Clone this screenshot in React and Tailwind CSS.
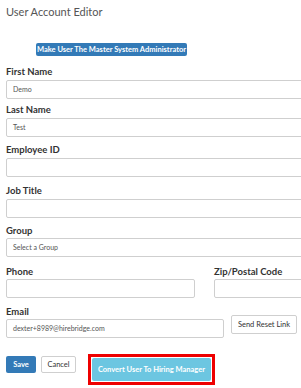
export default function App() {
  const font = { fontFamily: "Lato, 'Open Sans', sans-serif" };
  const label = "h-[12px] text-[9.5px] leading-[12px] font-bold text-[#333]";
  const input =
    "h-[19px] border border-[#cfcfcf] rounded-[2px] bg-white px-[6px] text-[7px] leading-[17px] text-[#555]";

  return (
    <div className="flex flex-col w-[301px] h-[388px] overflow-hidden bg-white pl-[6px]" style={font}>
      <div className="pt-[5px] text-[11px] leading-[14px] text-[#555]">User Account Editor</div>

      <div className="flex mt-[24px] ml-[30px]">
        <button className="h-[13px] w-[151px] rounded-[2px] bg-[#337ab7] text-[7.5px] leading-[13px] font-bold text-white">
          Make User The Master System Administrator
        </button>
      </div>

      <div className="mt-[10px]">
        <div className={label}>First Name</div>
        <div className={`${input} mt-[2px] w-[320px]`}>Demo</div>
      </div>

      <div className="mt-[5px]">
        <div className={label}>Last Name</div>
        <div className={`${input} mt-[2px] w-[320px]`}>Test</div>
      </div>

      <div className="mt-[7px]">
        <div className={label}>Employee ID</div>
        <div className={`${input} mt-[2px] w-[320px]`}></div>
      </div>

      <div className="mt-[8px]">
        <div className={label}>Job Title</div>
        <div className={`${input} mt-[2px] w-[320px]`}></div>
      </div>

      <div className="mt-[7px]">
        <div className={label}>Group</div>
        <div className={`${input} mt-[1px] w-[320px]`}>Select a Group</div>
      </div>

      <div className="mt-[9px] flex gap-[19px]">
        <div>
          <div className={label}>Phone</div>
          <div className={`${input} mt-[1px] w-[189px]`}></div>
        </div>
        <div>
          <div className={label}>Zip/Postal Code</div>
          <div className={`${input} mt-[1px] w-[120px]`}></div>
        </div>
      </div>

      <div className="mt-[8px]">
        <div className={label}>Email</div>
        <div className="flex items-start gap-[7px] mt-[-3px]">
          <div className={`${input} mt-[4px] w-[218px]`}>dexter+8989@hirebridge.com</div>
          <button className="h-[19px] w-[66px] border border-[#cfcfcf] rounded-[2px] bg-white text-[7.5px] leading-[17px] text-[#333]">
            Send Reset Link
          </button>
        </div>
      </div>

      <div className="mt-[16px] flex items-start">
        <button className="mt-[2px] h-[17px] w-[30px] rounded-[2px] bg-[#337ab7] text-[7.5px] leading-[17px] font-bold text-white">
          Save
        </button>
        <button className="mt-[2px] ml-[5px] h-[17px] w-[35px] border border-[#cfcfcf] rounded-[2px] bg-white text-[7.5px] leading-[15px] text-[#333]">
          Cancel
        </button>
        <div className="flex ml-[12px] border-[3px] border-[#ee0000] p-[1px]">
          <button className="h-[23px] w-[119px] rounded-[2px] bg-[#6cc6e1] text-[7.5px] leading-[23px] font-bold text-white">
            Convert User To Hiring Manager
          </button>
        </div>
      </div>
    </div>
  );
}
